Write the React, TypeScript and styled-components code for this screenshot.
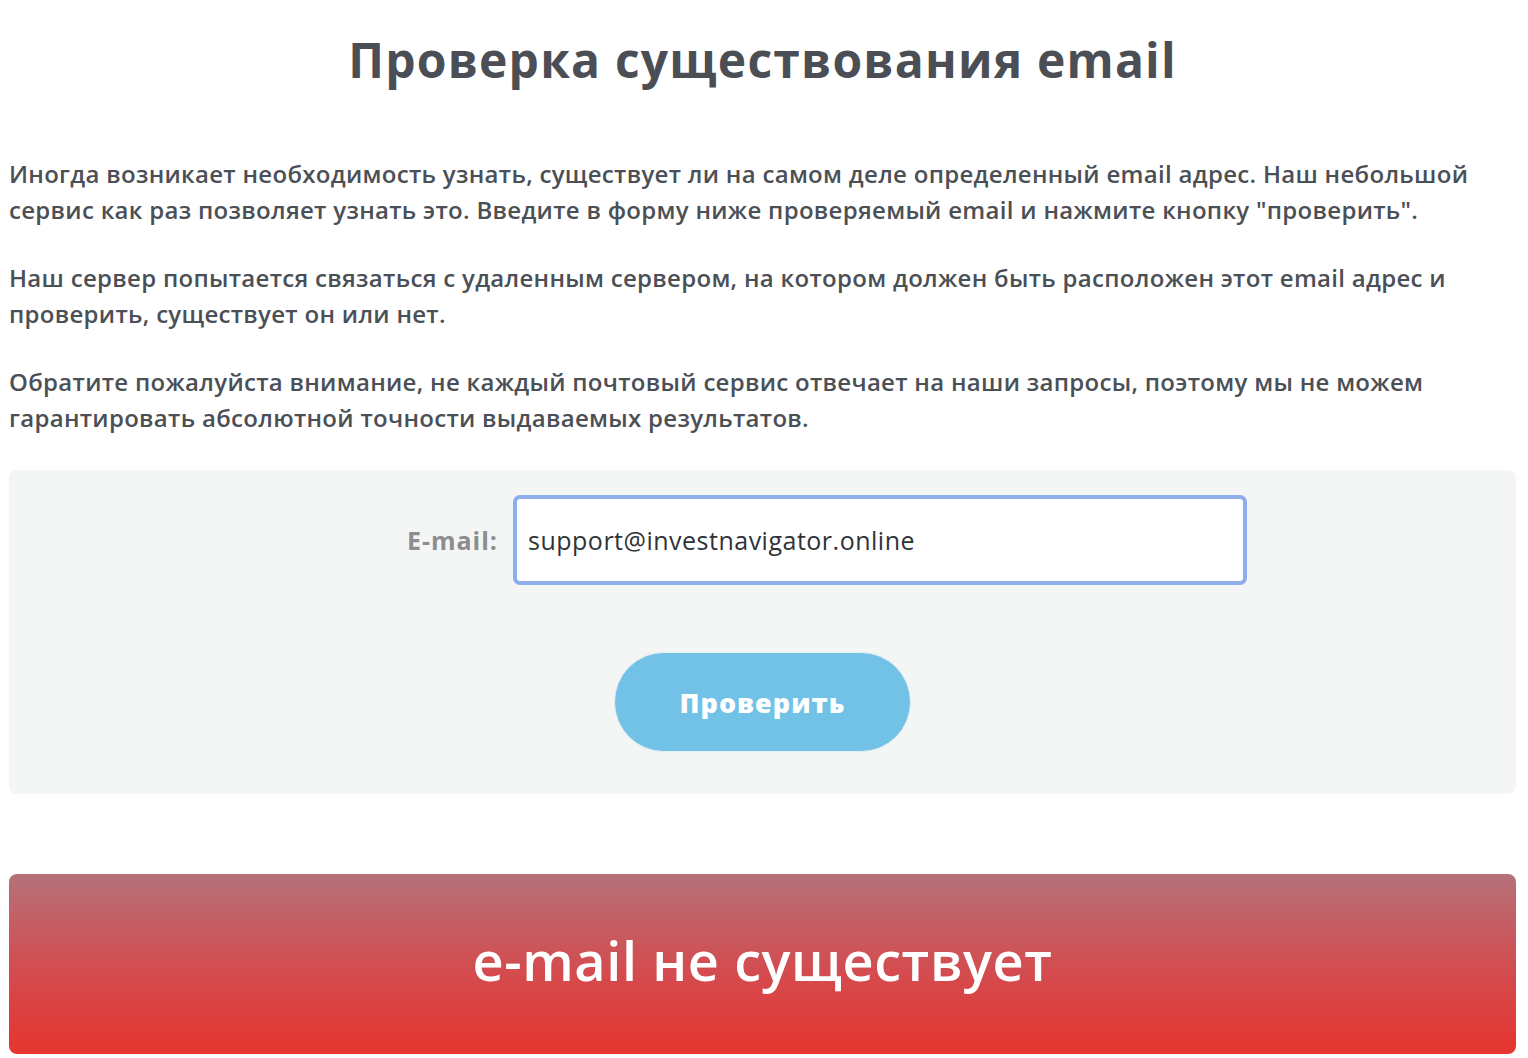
import React from "react";
import styled, { createGlobalStyle } from "styled-components";

const GlobalStyle = createGlobalStyle`
  html, body { margin: 0; padding: 0; background: #ffffff; }
  body { font-family: "Open Sans", "Liberation Sans", sans-serif; }
  * { box-sizing: border-box; }
`;

const Page = styled.main`
  padding: 0 12px 0 9px;
  display: flex;
  flex-direction: column;
`;

const Title = styled.h1`
  margin: 28px 0 0;
  text-align: center;
  font-family: "Open Sans", "Liberation Sans", sans-serif;
  font-weight: 700;
  font-size: 48px;
  line-height: 64px;
  color: #4b4f55;
  letter-spacing: 1.2px;
`;

const Intro = styled.div`
  margin-top: 64px;
  display: flex;
  flex-direction: column;
  gap: 32px;
`;

const Paragraph = styled.p`
  margin: 0;
  font-family: "Open Sans", "Liberation Sans", sans-serif;
  font-weight: 600;
  font-size: 24px;
  line-height: 36px;
  letter-spacing: 0.3px;
  color: #4b5056;
`;

const FormPanel = styled.form`
  margin-top: 34px;
  background: #f4f5f5;
  border-radius: 8px;
  padding: 25px 0 42px;
  display: flex;
  flex-direction: column;
  align-items: center;
  gap: 67px;
`;

const FieldRow = styled.div`
  width: 100%;
  display: grid;
  grid-template-columns: 504fr 734fr 269fr;
  align-items: center;
`;

const Label = styled.label`
  justify-self: end;
  padding-right: 15px;
  font-family: "Open Sans", "Liberation Sans", sans-serif;
  font-weight: 700;
  font-size: 25px;
  letter-spacing: 1px;
  color: #8b8d8f;
`;

const EmailInput = styled.input`
  width: 100%;
  height: 90px;
  padding: 0 11px;
  border: 4px solid #8eaeed;
  border-radius: 7px;
  background: #ffffff;
  font-family: "Open Sans", "Liberation Sans", sans-serif;
  font-weight: 500;
  font-size: 25px;
  letter-spacing: 0.5px;
  color: #2f3338;
  outline: none;
`;

const SubmitButton = styled.button`
  width: 297px;
  height: 100px;
  border: 1px solid #e4eef3;
  border-radius: 50px;
  background: #72c1e6;
  color: #ffffff;
  font-family: "Open Sans", "Liberation Sans", sans-serif;
  font-weight: 800;
  font-size: 27px;
  letter-spacing: 1px;
  cursor: pointer;
`;

const ResultBanner = styled.div`
  margin-top: 80px;
  height: 180px;
  padding-bottom: 8px;
  border-radius: 8px;
  background: linear-gradient(180deg, #b57179 0%, #d44b4e 55%, #e6342f 100%);
  display: flex;
  align-items: center;
  justify-content: center;
  color: #ffffff;
  font-family: "Open Sans", "Liberation Sans", sans-serif;
  font-weight: 600;
  font-size: 54px;
  letter-spacing: 0.6px;
`;

export default function App() {
  return (
    <>
      <GlobalStyle />
      <Page>
        <Title>Проверка существования email</Title>
        <Intro>
          <Paragraph>
            Иногда возникает необходимость узнать, существует ли на самом деле определенный email адрес. Наш небольшой
            <br />
            сервис как раз позволяет узнать это. Введите в форму ниже проверяемый email и нажмите кнопку "проверить".
          </Paragraph>
          <Paragraph>
            Наш сервер попытается связаться с удаленным сервером, на котором должен быть расположен этот email адрес и
            <br />
            проверить, существует он или нет.
          </Paragraph>
          <Paragraph>
            Обратите пожалуйста внимание, не каждый почтовый сервис отвечает на наши запросы, поэтому мы не можем
            <br />
            гарантировать абсолютной точности выдаваемых результатов.
          </Paragraph>
        </Intro>
        <FormPanel onSubmit={(e) => e.preventDefault()}>
          <FieldRow>
            <Label htmlFor="email">E-mail:</Label>
            <EmailInput id="email" type="text" defaultValue="support@investnavigator.online" />
          </FieldRow>
          <SubmitButton type="submit">Проверить</SubmitButton>
        </FormPanel>
        <ResultBanner>e-mail не существует</ResultBanner>
      </Page>
    </>
  );
}
